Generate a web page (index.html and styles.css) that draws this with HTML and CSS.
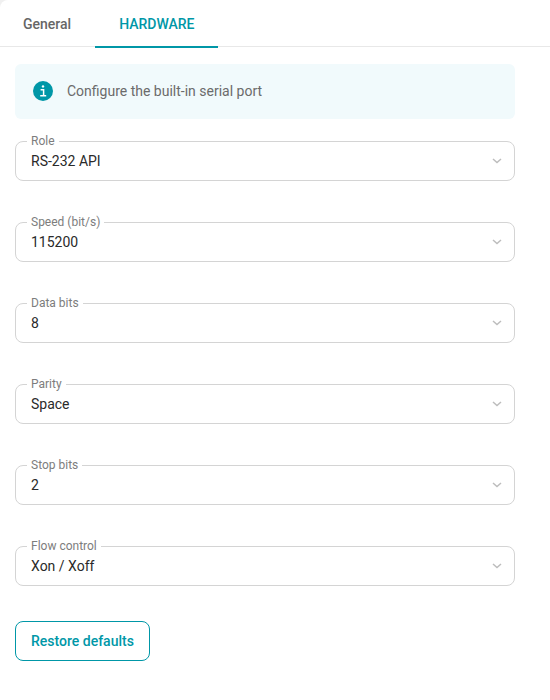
FILE: index.html
```html
<!DOCTYPE html>
<html lang="en">
<head>
  <meta charset="UTF-8" />
  <meta name="viewport" content="width=device-width, initial-scale=1.0"/>
  <title>Hardware settings</title>
  <link rel="stylesheet" href="styles.css">
</head>
<body>

  <div class="panel">
    <!-- Tabs -->
    <nav class="tabs">
      <a class="tab" href="#general">General</a>
      <a class="tab active" href="#hardware" aria-current="page">HARDWARE</a>
    </nav>

    <form class="settings">
      <div class="info">
        <svg class="info-icon" viewBox="0 0 20 20" aria-hidden="true">
          <circle cx="10" cy="10" r="10" fill="#0097a7"/>
          <circle cx="10" cy="5.4" r="1.2" fill="#fff"/>
          <path d="M7.6 8.7h3v6.1M7.2 14.8h6" fill="none" stroke="#fff" stroke-width="1.5"/>
        </svg>
        <span>Configure the built-in serial port</span>
      </div>

      <!-- Serial port settings -->
      <div class="field">
        <label for="role">Role</label>
        <select id="role">
          <option>RS-232 API</option>
        </select>
        <svg class="arrow" viewBox="0 0 10 6" aria-hidden="true"><path d="M1 1l4 3.5 4-3.5"/></svg>
      </div>

      <div class="field">
        <label for="speed">Speed (bit/s)</label>
        <select id="speed">
          <option>9600</option>
          <option selected>115200</option>
        </select>
        <svg class="arrow" viewBox="0 0 10 6" aria-hidden="true"><path d="M1 1l4 3.5 4-3.5"/></svg>
      </div>

      <div class="field">
        <label for="databits">Data bits</label>
        <select id="databits">
          <option>7</option>
          <option selected>8</option>
        </select>
        <svg class="arrow" viewBox="0 0 10 6" aria-hidden="true"><path d="M1 1l4 3.5 4-3.5"/></svg>
      </div>

      <div class="field">
        <label for="parity">Parity</label>
        <select id="parity">
          <option>None</option>
          <option selected>Space</option>
        </select>
        <svg class="arrow" viewBox="0 0 10 6" aria-hidden="true"><path d="M1 1l4 3.5 4-3.5"/></svg>
      </div>

      <div class="field">
        <label for="stopbits">Stop bits</label>
        <select id="stopbits">
          <option>1</option>
          <option selected>2</option>
        </select>
        <svg class="arrow" viewBox="0 0 10 6" aria-hidden="true"><path d="M1 1l4 3.5 4-3.5"/></svg>
      </div>

      <div class="field">
        <label for="flow">Flow control</label>
        <select id="flow">
          <option>None</option>
          <option selected>Xon / Xoff</option>
        </select>
        <svg class="arrow" viewBox="0 0 10 6" aria-hidden="true"><path d="M1 1l4 3.5 4-3.5"/></svg>
      </div>

      <button class="restore" type="reset">Restore defaults</button>
    </form>
  </div>

</body>
</html>
```

FILE: styles.css
```css
* {
  box-sizing: border-box;
}
body {
  margin: 0;
  background-color: #f0f0f0;
  font-family: Roboto, sans-serif;
  font-size: 14px;
  color: #212121;
}
.panel {
  min-height: 100vh;
  background: #fff;
  border-radius: 8px 0 0 0;
}
.tabs {
  display: flex;
  height: 47px;
  border-bottom: 1px solid #e8e8e8;
}
.tab {
  display: flex;
  align-items: center;
  height: 48px;
  padding: 2px 24px 0;
  border-bottom: 2px solid transparent;
  color: #666;
  font-weight: 500;
  text-decoration: none;
}
.tab:first-child {
  padding-left: 23px;
}
.tab.active {
  border-color: #0097a7;
  color: #0097a7;
}
.settings {
  padding: 17px 35px 24px 15px;
}
.info {
  display: flex;
  align-items: center;
  gap: 14px;
  height: 55px;
  margin-bottom: 22px;
  padding: 0 18px 1px;
  border-radius: 6px;
  background: #f1fafc;
  color: #6b6b6b;
}
.info-icon {
  width: 20px;
  height: 20px;
}
.field {
  position: relative;
  margin-bottom: 41px;
}
.field label {
  position: absolute;
  top: -8px;
  left: 12px;
  padding: 0 4px;
  background: #fff;
  color: #7d7d7d;
  font-size: 12px;
  line-height: 16px;
}
.field select {
  display: block;
  width: 100%;
  height: 40px;
  padding: 0 32px 0 15px;
  border: 1px solid #d4d4d4;
  border-radius: 8px;
  background: transparent;
  color: #2a2a2a;
  font: inherit;
  appearance: none;
}
.arrow {
  position: absolute;
  top: 17px;
  right: 13px;
  width: 10px;
  height: 6px;
  fill: none;
  stroke: #bdbdbd;
  stroke-width: 1.5;
  pointer-events: none;
}
.field:last-of-type {
  margin-bottom: 35px;
}
.restore {
  height: 40px;
  padding: 0 15px;
  border: 1px solid #0097a7;
  border-radius: 8px;
  background: #fff;
  color: #0097a7;
  font: inherit;
  font-weight: 500;
  cursor: pointer;
}
```
